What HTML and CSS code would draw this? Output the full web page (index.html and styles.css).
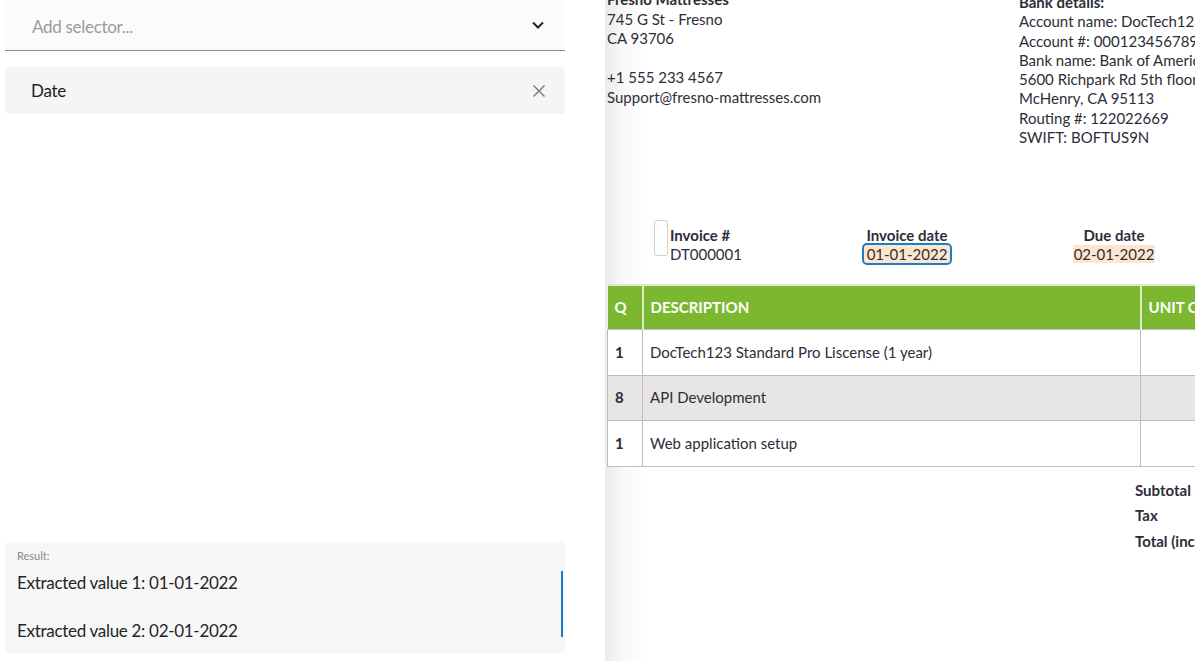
FILE: index.html
```html
<!DOCTYPE html>
<html lang="en">
<head>
	<meta charset="UTF-8">
	<title>Selector</title>
	<link rel="stylesheet" href="styles.css">
</head>
<body>
	<div class="page">
		<div class="side">
			<div class="selector">
				<span class="placeholder">Add selector...</span>
				<svg class="chev" width="14" height="10" viewBox="0 0 14 10"><path d="M2 2.5 L7 7.5 L12 2.5" fill="none" stroke="#222" stroke-width="2"/></svg>
			</div>
			<div class="chip">
				<span>Date</span>
				<svg class="close" width="14" height="14" viewBox="0 0 14 14"><path d="M1.5 1.5 L12.5 12.5 M12.5 1.5 L1.5 12.5" fill="none" stroke="#777" stroke-width="1.4"/></svg>
			</div>
			<div class="spacer"></div>
			<div class="result">
				<div class="result-label">Result:</div>
				<div class="result-text">
					<div>Extracted value 1: 01-01-2022</div>
					<div>&nbsp;</div>
					<div>Extracted value 2: 02-01-2022</div>
				</div>
			</div>
		</div>

		<div class="preview">
			<div class="doc">
				<div class="doc-head">
					<div class="company">
						<b>Fresno Mattresses</b><br>
						745 G St - Fresno<br>
						CA 93706<br>
						<br>
						+1 555 233 4567<br>
						Support@fresno-mattresses.com
					</div>
					<div class="bank">
						<b>Bank details:</b><br>
						Account name: DocTech123 Inc.<br>
						Account #: 000123456789<br>
						Bank name: Bank of America<br>
						5600 Richpark Rd 5th floor<br>
						McHenry, CA 95113<br>
						Routing #: 122022669<br>
						SWIFT: BOFTUS9N
					</div>
				</div>

				<div class="meta">
					<div class="meta-cell first">
						<span class="pick"></span>
						<div>
							<b>Invoice #</b><br>
							DT000001
						</div>
					</div>
					<div class="meta-cell center">
						<b>Invoice date</b><br>
						<span class="hl focus">01-01-2022</span>
					</div>
					<div class="meta-cell center">
						<b>Due date</b><br>
						<span class="hl">02-01-2022</span>
					</div>
				</div>

				<table class="items">
					<tr>
						<th class="q">Q</th>
						<th class="desc">DESCRIPTION</th>
						<th class="cost">UNIT COST</th>
					</tr>
					<tr>
						<td class="q">1</td>
						<td>DocTech123 Standard Pro Liscense (1 year)</td>
						<td class="cost">$1,200.00</td>
					</tr>
					<tr class="alt">
						<td class="q">8</td>
						<td>API Development</td>
						<td class="cost red">$150.00</td>
					</tr>
					<tr>
						<td class="q">1</td>
						<td>Web application setup</td>
						<td class="cost">$500.00</td>
					</tr>
				</table>

				<div class="totals">
					<div>Subtotal</div>
					<div>Tax</div>
					<div>Total (incl. tax)</div>
				</div>
			</div>
		</div>
	</div>
</body>
</html>
```

FILE: styles.css
```css
body{
	margin: 0;
	background: #fff;
	color: #222;
	font-family: "Lato", "Open Sans", sans-serif;
}
.page{
	display: flex;
	height: 661px;
	overflow: hidden;
}
.side{
	width: 560px;
	padding: 0 5px;
	display: flex;
	flex-direction: column;
	flex-shrink: 0;
	letter-spacing: -0.3px;
}
.selector{
	height: 51px;
	background: #fdfafb;
	border-bottom: 1px solid #8c8c8c;
	display: flex;
	align-items: center;
	justify-content: space-between;
	padding: 3px 20px 0 27px;
	box-sizing: border-box;
	font-size: 17px;
}
.placeholder{
	color: #9a9a9a;
}
.chev{
	margin-top: -3px;
}
.chip{
	margin-top: 16px;
	height: 47px;
	background: #f5f5f5;
	border-radius: 4px;
	display: flex;
	align-items: center;
	justify-content: space-between;
	padding: 0 19px 0 26px;
	font-size: 17px;
	color: #1e1e1e;
}
.spacer{
	flex: 1;
}
.result{
	background: #f7f7f7;
	border-radius: 4px;
	height: 111px;
	margin-bottom: 8px;
	padding: 7px 0 0 12px;
	box-sizing: border-box;
}
.result-label{
	font-size: 11px;
	color: #8a8a8a;
	line-height: 14px;
	letter-spacing: 0;
}
.result-text{
	margin-top: 8px;
	height: 66px;
	border-right: 2px solid #1a7ac6;
	margin-right: 2px;
	font-size: 17px;
	line-height: 24px;
	color: #252525;
}

.preview{
	flex: 1;
	margin-left: 35px;
	overflow: hidden;
	background: linear-gradient(to right, #ebebeb 0, #f9f9f9 20px, #fff 40px);
}
.doc{
	width: 820px;
	margin-top: -10px;
	padding-left: 2px;
	font-size: 15px;
	line-height: 19.5px;
	color: #2d2d38;
}
.doc-head{
	display: flex;
	height: 236px;
}
.company{
	width: 412px;
}
.bank{
	margin-top: 3px;
	line-height: 19.3px;
}
.meta{
	display: grid;
	grid-template-columns: 170px 166px 248px;
	margin-left: 47px;
	line-height: 19px;
}
.meta-cell.first{
	display: flex;
	align-items: stretch;
}
.meta-cell.center{
	text-align: center;
}
.pick{
	width: 12px;
	height: 34px;
	border: 1px solid #cfcfcf;
	border-radius: 3px;
	margin-top: -6px;
	margin-right: 2px;
}
.hl{
	background: #fde6cd;
	padding: 0 1px;
}
.hl.focus{
	outline: 2px solid #1d7cc7;
	border-radius: 3px;
	padding: 0 3px;
}
.items{
	border-collapse: collapse;
	margin-top: 20px;
	width: 700px;
	border-top: 2px solid #dfe9d6;
}
.items th{
	background: #7cb82f;
	color: #fff;
	text-align: left;
	height: 43px;
	padding: 0 7px;
	font-weight: 700;
	border-left: 2px solid #dcecc8;
}
.items th:first-child{
	border-left: none;
}
.items td{
	height: 44.5px;
	padding: 0 7px;
	border: 1px solid #bdbdbd;
	background: #fff;
}
.items tr.alt td{
	background: #e7e6e5;
}
.items .q{
	width: 20px;
	font-weight: 700;
}
.items .desc{
	width: 482px;
}
.items td.cost{
	text-align: right;
}
.items td.red{
	color: #b5362e;
}
.totals{
	margin-left: 528px;
	margin-top: 11px;
	font-weight: 700;
	line-height: 25.5px;
}
```
